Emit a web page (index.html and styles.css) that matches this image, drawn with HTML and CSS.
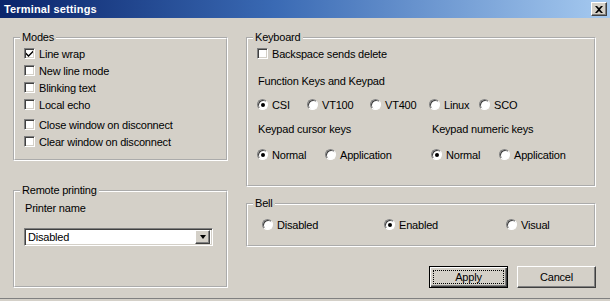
FILE: index.html
```html
<!DOCTYPE html>
<html lang="en">

<head>
  <meta charset="UTF-8">
  <meta name="viewport" content="width=device-width, initial-scale=1.0">
  <title>Terminal settings</title>
  <link rel="stylesheet" href="styles.css">
</head>

<body>
  <div class="dialog">
    <div class="titlebar">
      <span class="title">Terminal settings</span>
      <span class="close-btn">
        <svg width="8" height="7" viewBox="0 0 8 7">
          <path d="M0 0h2l2 2 2-2h2L5 3.5 8 7H6L4 5 2 7H0l3-3.5z" fill="#000" />
        </svg>
      </span>
    </div>

    <div class="content">
      <div class="col col-left">
        <fieldset class="group modes">
          <legend>Modes</legend>
          <div class="group-body">
            <label class="opt"><span class="check on"></span>Line wrap</label>
            <label class="opt"><span class="check"></span>New line mode</label>
            <label class="opt"><span class="check"></span>Blinking text</label>
            <label class="opt"><span class="check"></span>Local echo</label>
            <label class="opt gap-top"><span class="check"></span>Close window on disconnect</label>
            <label class="opt"><span class="check"></span>Clear window on disconnect</label>
          </div>
        </fieldset>

        <fieldset class="group printing">
          <legend>Remote printing</legend>
          <div class="group-body">
            <div class="caption">Printer name</div>
            <div class="combo">
              <span class="combo-text">Disabled</span>
              <span class="combo-btn"><span class="arrow"></span></span>
            </div>
          </div>
        </fieldset>
      </div>

      <div class="col col-right">
        <fieldset class="group keyboard">
          <legend>Keyboard</legend>
          <div class="group-body">
            <label class="opt"><span class="check"></span>Backspace sends delete</label>
            <div class="caption fk-caption">Function Keys and Keypad</div>
            <div class="radio-row fkeys">
              <label class="opt"><span class="radio on"></span>CSI</label>
              <label class="opt"><span class="radio"></span>VT100</label>
              <label class="opt"><span class="radio"></span>VT400</label>
              <label class="opt"><span class="radio"></span>Linux</label>
              <label class="opt"><span class="radio"></span>SCO</label>
            </div>
            <div class="keypad">
              <div class="keypad-col">
                <div class="caption">Keypad cursor keys</div>
                <div class="radio-row pair">
                  <label class="opt"><span class="radio on"></span>Normal</label>
                  <label class="opt"><span class="radio"></span>Application</label>
                </div>
              </div>
              <div class="keypad-col">
                <div class="caption">Keypad numeric keys</div>
                <div class="radio-row pair">
                  <label class="opt"><span class="radio on"></span>Normal</label>
                  <label class="opt"><span class="radio"></span>Application</label>
                </div>
              </div>
            </div>
          </div>
        </fieldset>

        <fieldset class="group bell">
          <legend>Bell</legend>
          <div class="group-body">
            <div class="radio-row bells">
              <label class="opt"><span class="radio"></span>Disabled</label>
              <label class="opt"><span class="radio on"></span>Enabled</label>
              <label class="opt"><span class="radio"></span>Visual</label>
            </div>
          </div>
        </fieldset>

        <div class="buttons">
          <button class="btn default"><span class="focus">Apply</span></button>
          <button class="btn">Cancel</button>
        </div>
      </div>
    </div>
  </div>
</body>

</html>
```

FILE: styles.css
```css
html {
  box-sizing: border-box;
  background-color: #d4d0c8;
  font-family: 'Liberation Sans', Arial, sans-serif;
  font-size: 11px;
  letter-spacing: -.2px;
  color: #000;
}

*,
*:before,
*::after {
  box-sizing: inherit;
}

body {
  margin: 0;
}

.dialog {
  width: 610px;
  height: 299px;
  background-color: #d4d0c8;
  border-bottom: 1px solid #808080;
  box-shadow: 0 1px 0 #404040;
}

/* title bar */
.titlebar {
  height: 18px;
  display: flex;
  align-items: center;
  justify-content: space-between;
  padding: 0 3px 0 4px;
  background: linear-gradient(to right, #0a246a, #3a6ab4 45%, #a6caf0);
}

.title {
  color: #fff;
  font-weight: bold;
  letter-spacing: .15px;
}

.close-btn {
  width: 16px;
  height: 14px;
  display: flex;
  align-items: center;
  justify-content: center;
  background-color: #d4d0c8;
  border: 1px solid;
  border-color: #fff #404040 #404040 #fff;
  box-shadow: inset -1px -1px 0 #808080;
}

/* layout */
.content {
  display: flex;
  gap: 18px;
  padding: 13px 14px 0 13px;
}

.col {
  display: flex;
  flex-direction: column;
}

.col-left {
  width: 215px;
}

.col-right {
  width: 350px;
}

/* group boxes */
.group {
  margin: 0;
  padding: 0;
  min-width: 0;
  border: 2px groove #fff;
}

.group legend {
  margin-left: 5px;
  padding: 0 2px;
  line-height: 13px;
}

.group-body {
  padding-left: 9px;
}

.modes {
  height: 130px;
}

.modes .group-body {
  padding-top: 1px;
}

.printing {
  height: 104px;
  margin-top: 23px;
}

.printing .group-body {
  padding-top: 3px;
}

.keyboard {
  height: 156px;
}

.keyboard .group-body {
  padding-top: 1px;
}

.bell {
  height: 50px;
  margin-top: 10px;
}

.bell .group-body {
  padding: 6px 0 0 14px;
}

/* options */
.opt {
  display: flex;
  align-items: center;
  height: 17px;
  white-space: nowrap;
}

.gap-top {
  margin-top: 3px;
}

.caption {
  line-height: 17px;
  padding-left: 1px;
}

.check {
  width: 11px;
  height: 11px;
  margin-right: 4px;
  flex: none;
  background: #fff center no-repeat;
  border: 1px solid;
  border-color: #808080 #fff #fff #808080;
  box-shadow: inset 1px 1px 0 #404040, inset -1px -1px 0 #d4d0c8;
}

.check.on {
  background-image: url("data:image/svg+xml,%3Csvg xmlns='http://www.w3.org/2000/svg' width='7' height='7' viewBox='0 0 7 7'%3E%3Cpath d='M0 2.5l2.5 2.5L7 .5v2L2.5 7 0 4.5z' fill='%23000'/%3E%3C/svg%3E");
}

.radio {
  position: relative;
  width: 11px;
  height: 11px;
  margin-right: 4px;
  flex: none;
  border-radius: 50%;
  background-color: #fff;
  border: 1px solid;
  border-color: #808080 #fff #fff #808080;
  box-shadow: inset 1px 1px 0 #404040;
}

.radio.on::after {
  content: "";
  position: absolute;
  left: 3px;
  top: 3px;
  width: 4px;
  height: 4px;
  border-radius: 50%;
  background-color: #000;
}

.radio-row {
  display: grid;
  align-items: center;
}

.fk-caption {
  margin-top: 11px;
}

.fkeys {
  margin-top: 6px;
  grid-template-columns: 50px 63px 59px 50px auto;
}

.keypad {
  display: flex;
  margin-top: 8px;
}

.keypad-col {
  flex: none;
  width: 174px;
}

.pair {
  margin-top: 8px;
  grid-template-columns: 68px auto;
}

.bells {
  grid-template-columns: 122px 122px auto;
}

/* combo box */
.combo {
  display: flex;
  align-items: center;
  width: 189px;
  height: 18px;
  margin-top: 11px;
  background-color: #fff;
  border: 1px solid;
  border-color: #808080 #fff #fff #808080;
  box-shadow: inset 1px 1px 0 #404040, inset -1px -1px 0 #d4d0c8;
  padding: 2px;
}

.combo-text {
  flex: 1;
  padding-left: 1px;
}

.combo-btn {
  width: 15px;
  height: 14px;
  display: flex;
  align-items: center;
  justify-content: center;
  background-color: #d4d0c8;
  border: 1px solid;
  border-color: #fff #404040 #404040 #fff;
  box-shadow: inset -1px -1px 0 #808080;
}

.arrow {
  width: 0;
  height: 0;
  border-left: 3.5px solid transparent;
  border-right: 3.5px solid transparent;
  border-top: 4px solid #000;
}

/* buttons */
.buttons {
  display: flex;
  justify-content: flex-end;
  gap: 9px;
  margin-top: 19px;
}

.btn {
  width: 79px;
  height: 22px;
  padding: 0;
  font: inherit;
  letter-spacing: inherit;
  color: #000;
  background-color: #d4d0c8;
  border: 1px solid;
  border-color: #fff #404040 #404040 #fff;
  box-shadow: inset -1px -1px 0 #808080;
}

.btn.default {
  border: 1px solid #000;
  box-shadow: inset 1px 1px 0 #fff, inset -1px -1px 0 #404040, inset -2px -2px 0 #808080;
  padding: 3px;
}

.focus {
  display: flex;
  align-items: center;
  justify-content: center;
  height: 100%;
  border: 1px dotted #000;
}
```
